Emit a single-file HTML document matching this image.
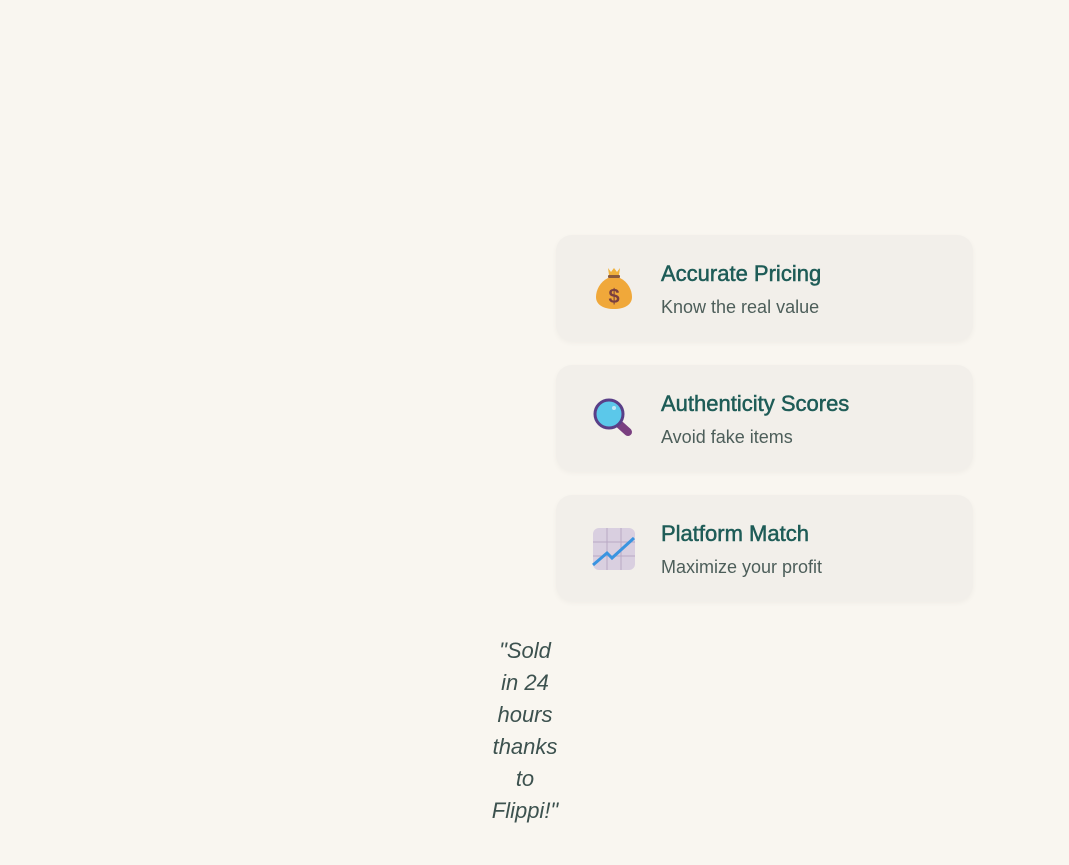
<!DOCTYPE html>
<html><head><meta charset="utf-8"><style>
body{margin:0;background:#f9f6f0;width:1069px;height:865px;position:relative;overflow:hidden;font-family:"Liberation Sans",sans-serif}
.card{position:absolute;left:556px;width:417px;height:106px;background:#f2efea;border-radius:16px;box-shadow:0 2px 6px rgba(0,0,0,0.04)}
.ic{position:absolute;left:36px;top:32px;width:44px;height:44px}
.t{position:absolute;left:105px;top:26px;font-size:22px;color:#1e5c57;-webkit-text-stroke:0.5px #1e5c57}
.s{position:absolute;left:105px;top:62px;font-size:18px;color:#4d5e5a}
.q{position:absolute;left:475px;top:635px;width:100px;text-align:center;font-style:italic;font-size:22px;line-height:32px;color:#3d524f}
</style></head><body>
<div class="card" style="top:235px">
<svg class="ic" viewBox="0 0 44 44"><path d="M16 1l3 4 3-4 3 4 3-4-1 7h-10z" fill="#f0b23c"/><rect x="16" y="8" width="12" height="3" rx="1" fill="#8a5a3c"/><path d="M16 11h12c8 4 12 12 12 19 0 8-8 12-18 12S4 38 4 30c0-7 4-15 12-19z" fill="#f0a83a"/><text x="22" y="36" font-size="20" text-anchor="middle" fill="#7a3f3f" font-family="Liberation Sans" font-weight="bold">$</text></svg>
<div class="t">Accurate Pricing</div><div class="s">Know the real value</div></div>
<div class="card" style="top:365px">
<svg class="ic" viewBox="0 0 44 44"><line x1="26" y1="26" x2="36" y2="35" stroke="#7a3f80" stroke-width="8" stroke-linecap="round"/><circle cx="17" cy="17" r="14" fill="#5bc8ea" stroke="#5a3f88" stroke-width="3"/><circle cx="22" cy="11" r="2" fill="#bfeaf7"/></svg>
<div class="t">Authenticity Scores</div><div class="s">Avoid fake items</div></div>
<div class="card" style="top:495px">
<svg class="ic" viewBox="0 0 44 44"><rect x="1" y="1" width="42" height="42" rx="6" fill="#d9cfe0"/><path d="M15 1v42M29 1v42M1 15h42M1 29h42" stroke="#b9a9c4" stroke-width="1"/><path d="M1 38l14-12 5 5 22-20" fill="none" stroke="#3a94e0" stroke-width="3"/></svg>
<div class="t">Platform Match</div><div class="s">Maximize your profit</div></div>
<div class="q">"Sold<br>in 24<br>hours<br>thanks<br>to<br>Flippi!"</div>
</body></html>
